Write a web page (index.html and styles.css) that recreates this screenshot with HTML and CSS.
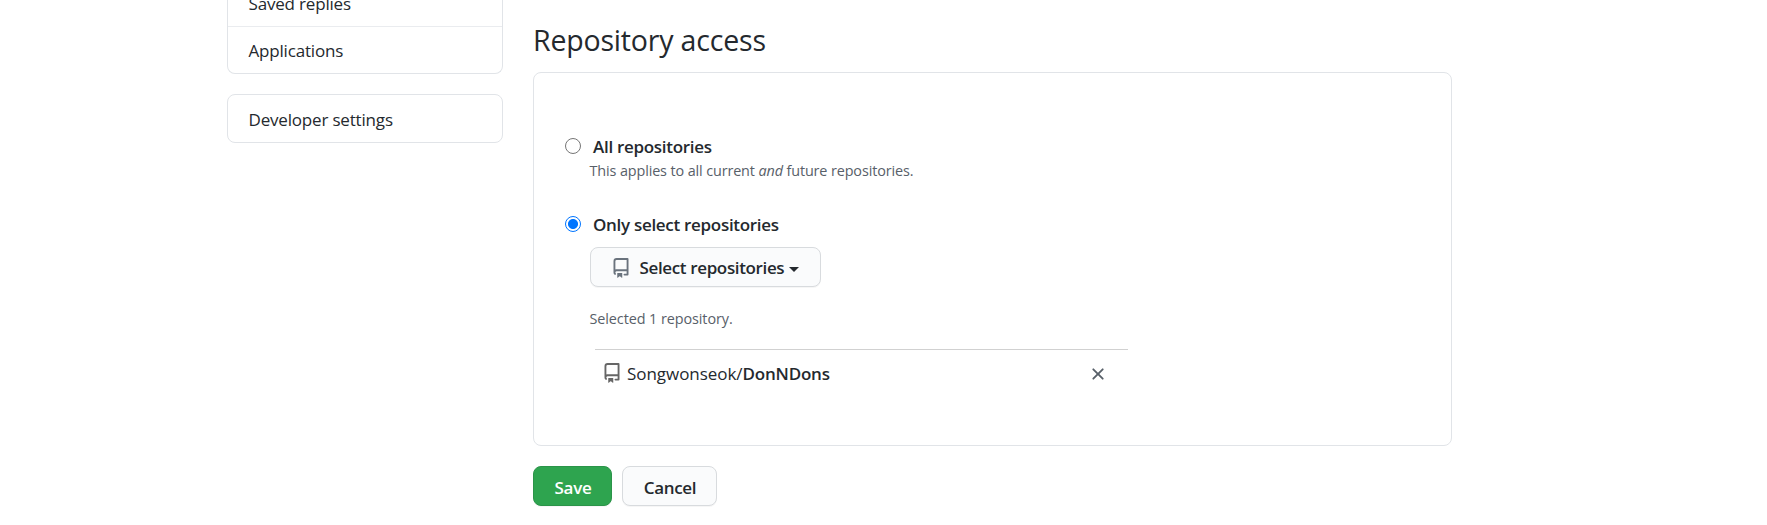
FILE: index.html
```html
<!DOCTYPE html>
<html lang="en">
<head>
<meta charset="utf-8">
<title>Repository access</title>
<link rel="stylesheet" href="styles.css">
</head>
<body>
<svg class="defs" width="0" height="0" aria-hidden="true">
  <symbol id="repo" viewBox="0 0 16 16"><path fill-rule="evenodd" d="M2 2.5A2.5 2.5 0 014.5 0h8.75a.75.75 0 01.75.75v12.5a.75.75 0 01-.75.75h-2.5a.75.75 0 110-1.5h1.75v-2h-8a1 1 0 00-.714 1.7.75.75 0 01-1.072 1.05A2.495 2.495 0 012 11.5v-9zm10.5-1V9h-8c-.356 0-.694.074-1 .208V2.5a1 1 0 011-1h8zM5 12.25v3.25a.25.25 0 00.4.2l1.45-1.087a.25.25 0 01.3 0L8.6 15.7a.25.25 0 00.4-.2v-3.25a.25.25 0 00-.25-.25h-3.5a.25.25 0 00-.25.25z"/></symbol>
  <symbol id="x" viewBox="0 0 16 16"><path fill-rule="evenodd" d="M3.72 3.72a.75.75 0 011.06 0L8 6.94l3.22-3.22a.75.75 0 111.06 1.06L9.06 8l3.22 3.22a.75.75 0 11-1.06 1.06L8 9.06l-3.22 3.22a.75.75 0 01-1.06-1.06L6.94 8 3.72 4.78a.75.75 0 010-1.06z"/></symbol>
</svg>
<div class="page">
  <aside class="sidebar">
    <nav class="menu menu-account">
      <a class="menu-item menu-replies">Saved replies</a>
      <a class="menu-item">Applications</a>
    </nav>
    <nav class="menu">
      <a class="menu-item">Developer settings</a>
    </nav>
  </aside>
  <main class="content">
    <h1 class="title">Repository access</h1>
    <section class="box">
      <label class="option"><span class="radio"></span><span class="option-label">All repositories</span></label>
      <p class="note note-all">This applies to all current <em>and</em> future repositories.</p>
      <label class="option option-select"><span class="radio radio-on"></span><span class="option-label">Only select repositories</span></label>
      <button class="btn select-btn"><svg class="icon"><use href="#repo"/></svg><span class="select-text">Select repositories</span><span class="caret"></span></button>
      <p class="note note-selected">Selected 1 repository.</p>
      <div class="repo-row">
        <svg class="icon icon-row"><use href="#repo"/></svg>
        <span class="repo-name"><span class="owner">Songwonseok/</span><strong class="name">DonNDons</strong></span>
        <svg class="icon icon-remove"><use href="#x"/></svg>
      </div>
    </section>
    <div class="actions">
      <button class="btn btn-save">Save</button>
      <button class="btn btn-cancel">Cancel</button>
    </div>
  </main>
</div>
</body>
</html>
```
FILE: styles.css
```css
* { box-sizing: border-box; }
body {
  margin: 0;
  height: 525px;
  overflow: hidden;
  background: #fff;
  color: #24292e;
  font: 17px/26px "Open Sans", "Noto Sans", sans-serif;
}
.defs { display: block; position: absolute; }
.page { display: flex; gap: 30px; padding-left: 227px; }
.sidebar { width: 276px; flex: none; letter-spacing: -.18px; }
.menu { border: 1px solid #e1e4e8; border-radius: 8px; margin-bottom: 20px; }
.menu-account { border-top: 0; border-radius: 0 0 8px 8px; }
.menu-item { display: flex; align-items: center; height: 47px; padding: 2px 0 0 20.5px; }
.menu-replies { height: 27px; padding-top: 0; padding-bottom: 18px; border-bottom: 1px solid #eaecef; }
.menu-account .menu-item + .menu-item { height: 46px; }
.content { width: 919px; flex: none; }
.title { margin: 20px 0 12px; font-size: 28.5px; line-height: 40px; font-weight: 400; letter-spacing: -.18px; white-space: nowrap; }
.box { height: 374px; padding: 60px 30px 0 31px; border: 1px solid #e1e4e8; border-radius: 8px; }
.option { display: flex; align-items: center; height: 26px; gap: 12px; }
.option-label { padding-top: 2px; font-weight: 600; letter-spacing: -.3px; }
.radio { width: 16px; height: 16px; border: 1px solid #767676; border-radius: 50%; }
.radio-on { border-color: #0075ff; background: radial-gradient(circle, #0075ff 4.6px, #fff 5.4px); }
.note { margin: 0 0 0 24.5px; font-size: 14.4px; line-height: 23px; letter-spacing: -.12px; color: #586069; }
.option-select { margin-top: 29px; }
.btn {
  display: flex; align-items: center; justify-content: center;
  height: 40px; padding: 3px 0 0 1px; border: 1px solid #d8dbde; border-radius: 8px;
  background: #fafbfc; color: #24292e; font: 600 17px/26px "Open Sans", "Noto Sans", sans-serif;
  letter-spacing: -.3px; box-shadow: 0 1px 0 rgba(27,31,35,.04); white-space: nowrap;
}
.select-btn { width: 231px; margin: 10px 0 0 25px; padding: 2px 0 0 20px; justify-content: flex-start; }
.select-text { letter-spacing: -.36px; }
.icon { width: 20px; height: 20px; flex: none; fill: #6a737d; }
.select-btn .icon { margin-right: 8.5px; }
.caret { margin: 3px 0 0 5px; border: 5px solid transparent; border-top-color: #24292e; border-bottom: 0; }
.note-selected { margin-top: 20px; letter-spacing: -.08px; }
.repo-row { display: flex; align-items: center; width: 533px; height: 48px; margin: 19px 0 0 30px; border-top: 1px solid #d1d1d1; }
.icon-row { margin: -1px 0 0 7px; fill: #666; }
.repo-name { margin-left: 5px; flex: 1; white-space: nowrap; }
.owner { letter-spacing: -.05px; }
.name { font-weight: 600; letter-spacing: -.2px; }
.icon-remove { margin-right: 20px; fill: #586069; }
.actions { display: flex; gap: 10px; margin-top: 20px; }
.btn-save { width: 79px; background: #2ea44f; border-color: #2b9449; color: #fff; }
.btn-cancel { width: 95px; }
```
